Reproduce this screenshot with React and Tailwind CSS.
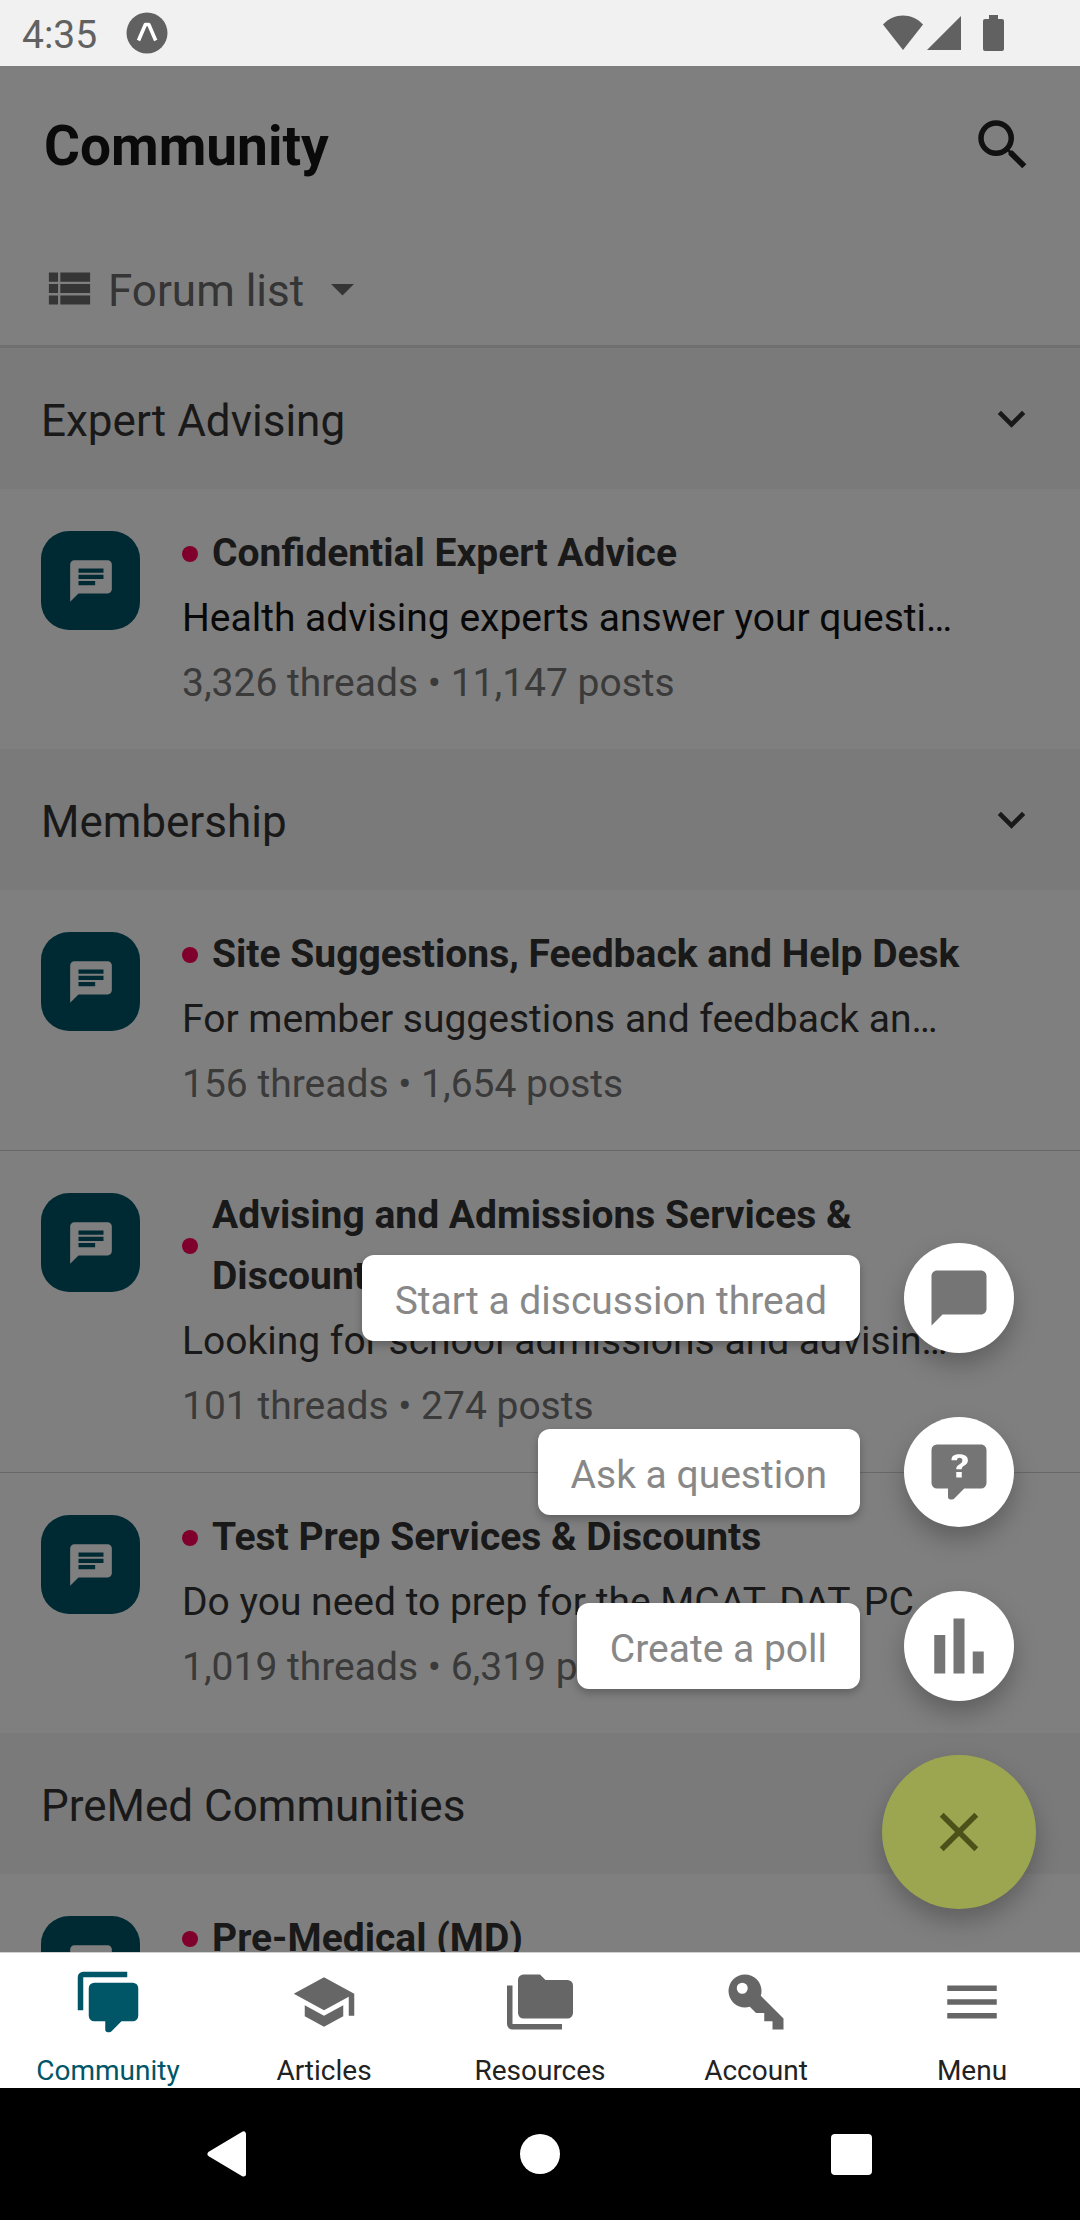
import { MdArrowDropDown, MdChat, MdChatBubble, MdClose, MdMenu, MdSchool, MdSearch, MdViewList } from "react-icons/md";
import clsx from "clsx";

const SECTIONS = [
  {
    name: "Expert Advising",
    forums: [
      {
        title: "Confidential Expert Advice",
        description: "Health advising experts answer your questi…",
        stats: "3,326 threads • 11,147 posts",
        highlighted: true,
      },
    ],
  },
  {
    name: "Membership",
    forums: [
      {
        title: "Site Suggestions, Feedback and Help Desk",
        description: "For member suggestions and feedback an…",
        stats: "156 threads • 1,654 posts",
      },
      {
        title: "Advising and Admissions Services & Discounts",
        description: "Looking for school admissions and advisin…",
        stats: "101 threads • 274 posts",
      },
      {
        title: "Test Prep Services & Discounts",
        description: "Do you need to prep for the MCAT, DAT, PC…",
        stats: "1,019 threads • 6,319 posts",
      },
    ],
  },
  {
    name: "PreMed Communities",
    forums: [{ title: "Pre-Medical (MD)" }],
  },
];

/* Icons that are not part of the Material set in react-icons */
function PathIcon({ d, className }) {
  return (
    <svg viewBox="0 0 24 24" fill="currentColor" fillRule="evenodd" className={className} aria-hidden="true">
      <path d={d} />
    </svg>
  );
}

const COMMENT_QUESTION =
  "M4 2A2 2 0 0 0 2 4V16A2 2 0 0 0 4 18H8V21A1 1 0 0 0 9 22H9.5C9.75 22 10 21.9 10.2 21.71L13.9 18H20A2 2 0 0 0 22 16V4C22 2.89 21.1 2 20 2H4M12.19 5.5C11.3 5.5 10.59 5.68 10.05 6.04C9.5 6.4 9.22 7 9.27 7.69H11.24C11.24 7.41 11.34 7.2 11.5 7.06C11.7 6.92 11.92 6.85 12.19 6.85C12.5 6.85 12.77 6.93 12.95 7.11C13.13 7.28 13.22 7.5 13.22 7.8C13.22 8.08 13.14 8.33 13 8.54C12.83 8.76 12.62 8.94 12.36 9.08C11.84 9.4 11.5 9.68 11.29 9.92C11.1 10.16 11 10.5 11 11H13C13 10.72 13.05 10.5 13.14 10.32C13.23 10.15 13.4 10 13.66 9.85C14.12 9.64 14.5 9.36 14.79 9C15.08 8.63 15.23 8.24 15.23 7.8C15.23 7.1 14.96 6.54 14.42 6.12C13.88 5.71 13.13 5.5 12.19 5.5M11 12V14H13V12H11Z";
const POLL = "M3 22V8H7V22H3M10 22V2H14V22H10M17 22V14H21V22H17Z";
const COMMENT_MULTIPLE =
  "M12 23A1 1 0 0 1 11 22V19H7A2 2 0 0 1 5 17V7A2 2 0 0 1 7 5H21A2 2 0 0 1 23 7V17A2 2 0 0 1 21 19H16.9L13.2 22.71C13 22.89 12.76 23 12.5 23H12M3 15H1V3A2 2 0 0 1 3 1H19V3H3V15Z";
const FOLDER_MULTIPLE =
  "M22 4H14L12 2H6A2 2 0 0 0 4 4V16A2 2 0 0 0 6 18H22A2 2 0 0 0 24 16V6A2 2 0 0 0 22 4M2 6H0V20A2 2 0 0 0 2 22H20V20H2V6Z";
const KEY =
  "M22 18V22H18V19H15V16H12L9.74 13.74C9.19 13.91 8.61 14 8 14A6 6 0 0 1 2 8A6 6 0 0 1 8 2A6 6 0 0 1 14 8C14 8.61 13.91 9.19 13.74 9.74L22 18M7 5A2 2 0 0 0 5 7A2 2 0 0 0 7 9A2 2 0 0 0 9 7A2 2 0 0 0 7 5Z";
const CHEVRON_DOWN = "M7.41 8.59L12 13.17l4.59-4.58L18 10l-6 6-6-6z";

const ACTIONS = [
  { label: "Start a discussion thread", icon: <MdChatBubble className="size-[66px]" /> },
  { label: "Ask a question", icon: <PathIcon d={COMMENT_QUESTION} className="size-[66px]" /> },
  { label: "Create a poll", icon: <PathIcon d={POLL} className="size-[66px]" /> },
];

const TABS = [
  { label: "Community", icon: <PathIcon d={COMMENT_MULTIPLE} className="size-[66px]" />, active: true },
  { label: "Articles", icon: <MdSchool className="size-[66px]" /> },
  { label: "Resources", icon: <PathIcon d={FOLDER_MULTIPLE} className="size-[66px]" /> },
  { label: "Account", icon: <PathIcon d={KEY} className="size-[66px]" /> },
  { label: "Menu", icon: <MdMenu className="size-[66px]" /> },
];

function StatusBar() {
  return (
    <div className="flex h-[66px] shrink-0 items-center justify-between bg-[#f1f1f1] pl-[22px] pr-[76px] text-[#616161]">
      <div className="flex items-center gap-[29px]">
        <span className="pt-1 text-[39px] leading-[44px]">4:35</span>
        <svg viewBox="0 0 42 42" className="size-[42px]" aria-hidden="true">
          <circle cx="21" cy="21" r="20.5" fill="currentColor" />
          <path d="M12.5 28.5L19.4 12.5H22.8L29.7 28.5" fill="none" stroke="#fff" strokeWidth="3.6" strokeLinejoin="round" />
        </svg>
      </div>
      <svg viewBox="0 0 122 38" className="h-[38px] w-[122px]" fill="currentColor" aria-hidden="true">
        <path d="M21 36L1 10.500C12-1.500 30-1.500 41 10.500Z" />
        <path d="M79 2V36H45Z" />
        <path d="M107 1h9v4h4a2 2 0 0 1 2 2v28a2 2 0 0 1-2 2h-17a2 2 0 0 1-2-2V7a2 2 0 0 1 2-2h4z" />
      </svg>
    </div>
  );
}

function Header() {
  return (
    <header className="shrink-0 border-b-3 border-[#e0e0e0] bg-white pb-[29px] pt-[45px]">
      <div className="flex items-center justify-between px-11">
        <h1 className="pt-[3px] text-[55px] font-bold leading-[64px] text-[#141414]">Community</h1>
        <button type="button" aria-label="Search" className="text-[#222]">
          <MdSearch className="size-[66px]" />
        </button>
      </div>
      <button type="button" className="ml-[42px] mt-[83px] flex items-center gap-[11px] text-[#6a6a6a]">
        <MdViewList className="size-[55px]" />
        <span className="pt-1.5 text-[44px] leading-[49px]">Forum list</span>
        <MdArrowDropDown className="size-[55px]" />
      </button>
    </header>
  );
}

function ForumRow({ forum }) {
  return (
    <li className="flex gap-[42px] pb-[35px] pl-[41px] pr-[110px] pt-[34px]">
      <div className="mt-2 flex size-[99px] shrink-0 items-center justify-center rounded-[28px] bg-[#005566] text-white">
        <MdChat className="size-[50px]" />
      </div>
      <div className="flex min-w-0 flex-1 flex-col gap-1 text-[39px] leading-[61px]">
        <div className="flex items-center gap-[14px]">
          <span className="size-4 shrink-0 rounded-full bg-[#ff0058]" />
          <h3 className="font-bold text-[#333]">{forum.title}</h3>
        </div>
        {forum.description && (
          <p className={clsx("whitespace-nowrap", forum.highlighted ? "text-[#111]" : "text-[#333]")}>
            {forum.description}
          </p>
        )}
        {forum.stats && <p className="whitespace-nowrap text-[#757575]">{forum.stats}</p>}
      </div>
    </li>
  );
}

function ForumSection({ section }) {
  return (
    <section>
      <button
        type="button"
        aria-expanded="true"
        className="flex h-[141px] w-full items-center justify-between bg-[#f4f4f4] px-[41px] text-[#333]"
      >
        <span className="pt-1.5 text-[44px] leading-[49px]">{section.name}</span>
        <PathIcon d={CHEVRON_DOWN} className="size-[55px]" />
      </button>
      <ul className="divide-y divide-[#d0d0d0] bg-white">
        {section.forums.map((forum) => (
          <ForumRow key={forum.title} forum={forum} />
        ))}
      </ul>
    </section>
  );
}

function ActionMenu() {
  return (
    <div className="absolute bottom-[43px] right-11 flex flex-col items-end">
      <div className="mb-[54px] mr-[22px] flex flex-col items-end gap-16">
        {ACTIONS.map((action) => (
          <button key={action.label} type="button" className="flex items-center gap-11">
            <span className="rounded-xl bg-white px-[33px] pb-[18px] pt-6 text-[39px] leading-[44px] text-[#888] shadow-[0_4px_8px_rgba(0,0,0,0.25)]">
              {action.label}
            </span>
            <span className="flex size-[110px] items-center justify-center rounded-full bg-white text-[#757575] shadow-[0_12px_24px_rgba(0,0,0,0.25)]">
              {action.icon}
            </span>
          </button>
        ))}
      </div>
      <button
        type="button"
        aria-label="Close"
        className="flex size-[154px] items-center justify-center rounded-full bg-[#9ca651] text-[#4b5119] shadow-[0_12px_24px_rgba(0,0,0,0.25)]"
      >
        <MdClose className="size-[66px]" />
      </button>
    </div>
  );
}

function TabBar() {
  return (
    <nav className="grid shrink-0 grid-cols-5 border-t border-[#d0d0d0] bg-white pb-px pt-4">
      {TABS.map((tab) => (
        <a
          key={tab.label}
          href="#"
          aria-current={tab.active ? "page" : undefined}
          className={clsx("flex flex-col items-center gap-[19px]", tab.active ? "text-[#005566]" : "text-[#666]")}
        >
          {tab.icon}
          <span className={clsx("text-[28px] leading-[33px]", !tab.active && "text-[#222]")}>{tab.label}</span>
        </a>
      ))}
    </nav>
  );
}

function SystemNav() {
  return (
    <div className="grid h-[132px] shrink-0 grid-cols-3 items-center justify-items-center bg-black px-[73px] text-white">
      <button type="button" aria-label="Back">
        <svg viewBox="0 0 46 46" className="size-[46px]" fill="currentColor" stroke="currentColor" strokeWidth="5" strokeLinejoin="round">
          <path d="M37.500 3v40L4 23z" />
        </svg>
      </button>
      <button type="button" aria-label="Home" className="size-10 rounded-full bg-white" />
      <button type="button" aria-label="Recent apps" className="size-[41px] rounded-[4px] bg-white" />
    </div>
  );
}

export default function App() {
  return (
    <div className="flex h-screen flex-col overflow-hidden font-['Roboto',sans-serif]">
      <StatusBar />
      <main className="relative flex min-h-0 flex-1 flex-col overflow-hidden bg-white">
        <Header />
        <div className="min-h-0 flex-1 overflow-hidden">
          {SECTIONS.map((section) => (
            <ForumSection key={section.name} section={section} />
          ))}
        </div>
        {/* Dimmed backdrop behind the open action menu */}
        <div className="absolute inset-0 bg-black/50" />
        <ActionMenu />
      </main>
      <TabBar />
      <SystemNav />
    </div>
  );
}
